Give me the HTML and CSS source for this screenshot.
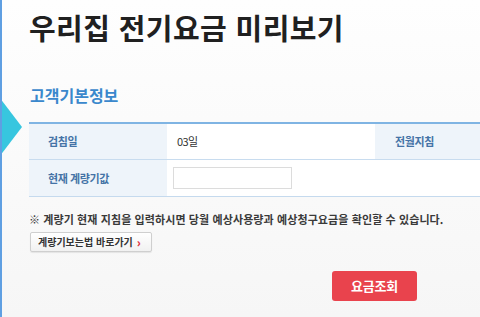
FILE: index.html
```html
<!DOCTYPE html>
<html lang="ko">
<head>
<meta charset="utf-8">
<title>우리집 전기요금 미리보기</title>
<link rel="stylesheet" href="styles.css">
</head>
<body>
<div class="page">
  <span class="pointer" aria-hidden="true"></span>
  <h1 class="title">우리집 전기요금 미리보기</h1>
  <h2 class="section">고객기본정보</h2>
  <table class="info">
    <tr class="r1">
      <th class="lab">검침일</th>
      <td class="val">03일</td>
      <th class="lab lab2">전월지침</th>
    </tr>
    <tr class="r2">
      <th class="lab">현재 계량기값</th>
      <td class="val"><span class="inp"></span></td>
      <td class="blank"></td>
    </tr>
  </table>
  <p class="note">※ 계량기 현재 지침을 입력하시면 당월 예상사용량과 예상청구요금을 확인할 수 있습니다.</p>
  <div class="linkrow"><span class="linkbtn">계량기보는법 바로가기 <b class="arr">›</b></span></div>
  <div class="actions"><span class="redbtn">요금조회</span></div>
  <h2 class="section next">예상 사용량 및 요금</h2>
</div>
</body>
</html>
```
FILE: styles.css
```css
html, body {
  margin: 0;
  padding: 0;
  width: 480px;
  height: 317px;
  overflow: hidden;
}
body {
  background: linear-gradient(#fefefe, #f6f6f6);
  font-family: "Noto Sans CJK KR", "Noto Sans", sans-serif;
  color: #222;
}
.page {
  position: relative;
  height: 317px;
  border-left: 2px solid #5f9fe2;
  padding-left: 27px;
  box-sizing: border-box;
  overflow: hidden;
}
.pointer {
  position: absolute;
  left: -2px;
  top: 98px;
  width: 0;
  height: 0;
  border-top: 29px solid transparent;
  border-bottom: 29px solid transparent;
  border-left: 22px solid #37c6df;
}
.title {
  margin: 0;
  padding-top: 4px;
  font-size: 29px;
  line-height: 46px;
  font-weight: 700;
  letter-spacing: 0.4px;
  color: #202020;
}
.section {
  margin: 34px 0 0 1px;
  font-size: 16px;
  line-height: 22px;
  font-weight: 700;
  color: #3a88cc;
  letter-spacing: 0;
}
.info {
  margin-top: 16px;
  width: 100%;
  table-layout: fixed;
  border-collapse: collapse;
  border-top: 2px solid #7fb4e3;
  border-bottom: 1px solid #c5daee;
  font-size: 11px;
}
.info th, .info td {
  padding: 0;
  text-align: left;
  vertical-align: middle;
}
.r1 { height: 36px; border-bottom: 1px solid #c8dcef; }
.r2 { height: 37px; }
.lab {
  width: 119px;
  padding-left: 19px !important;
  background: #eef4fa;
  color: #4473a6;
  font-weight: 700;
  letter-spacing: -0.4px;
}
.lab2 {
  width: auto;
  padding-left: 20px !important;
  background: #eef4fa;
}
.val {
  width: 198px;
  padding-left: 10px !important;
  background: #fff;
  color: #333;
  letter-spacing: -0.6px;
}
.blank { background: #fff; }
.inp {
  display: block;
  width: 117px;
  height: 20px;
  margin-left: -4px;
  border: 1px solid #dcdcdc;
  background: #fff;
}
.note {
  margin: 14px 0 0 0;
  font-size: 11px;
  line-height: 16px;
  font-weight: 700;
  letter-spacing: 0.1px;
  color: #3a3a3a;
}
.note::first-letter { color: #999; }
.linkrow {
  margin-top: 5px;
  display: flex;
}
.linkbtn {
  display: inline-flex;
  align-items: center;
  height: 18px;
  margin-left: 1px;
  padding: 0 10px 0 7px;
  border: 1px solid #cfcfcf;
  border-radius: 2px;
  background: linear-gradient(#ffffff, #f1f1f1);
  box-shadow: 0 1px 1px rgba(0,0,0,0.08);
  font-size: 10px;
  font-weight: 700;
  letter-spacing: 0;
  color: #333;
}
.arr {
  margin-left: 4px;
  color: #e2323c;
  font-size: 12px;
  line-height: 10px;
}
.actions {
  display: flex;
  justify-content: flex-start;
  padding-left: 303px;
  margin-top: 19px;
}
.redbtn {
  display: flex;
  align-items: center;
  justify-content: center;
  width: 85px;
  height: 30px;
  border-radius: 3px;
  background: #e9434d;
  color: #fff;
  font-size: 13px;
  font-weight: 700;
  letter-spacing: -0.2px;
}
.section.next {
  margin-top: 15px;
  color: #5aa4de;
}
```
